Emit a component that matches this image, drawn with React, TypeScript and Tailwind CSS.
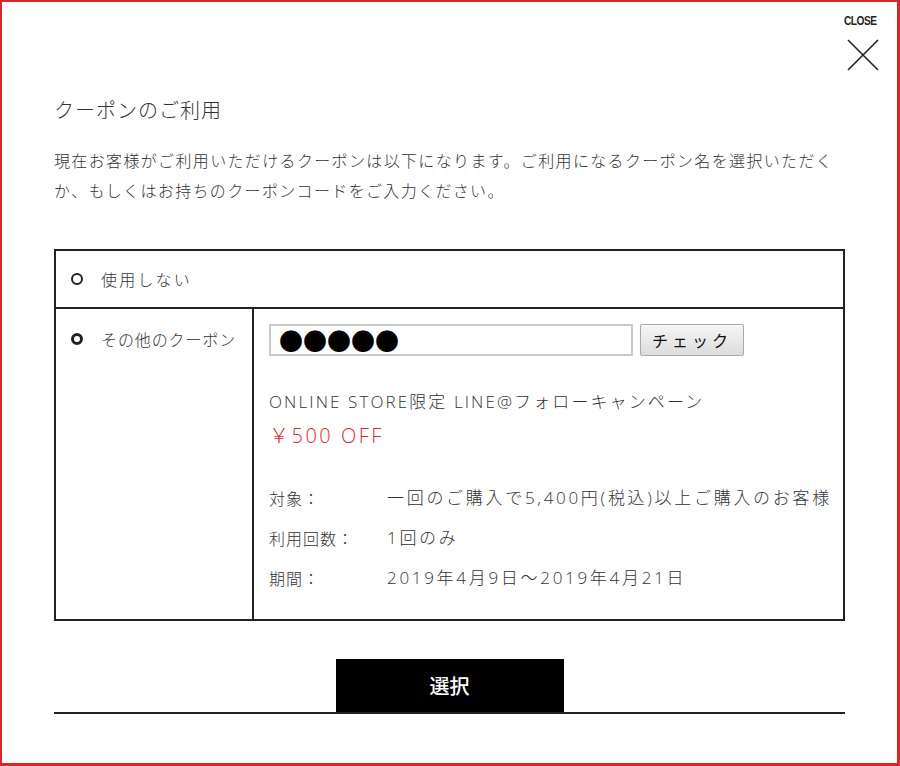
import { useState } from "react";

const jp = "font-['Noto_Sans_CJK_JP',sans-serif]";
const mixed = "font-['Open_Sans','Noto_Sans_CJK_JP',sans-serif]";

const details = [
  { label: "対象：", value: "一回のご購入で5,400円(税込)以上ご購入のお客様" },
  { label: "利用回数：", value: "1回のみ" },
  { label: "期間：", value: "2019年4月9日～2019年4月21日" },
];

function Radio({ checked }: { checked: boolean }) {
  return (
    <span
      className={`block h-[12px] w-[12px] shrink-0 rounded-full border-[#222] ${
        checked ? "border-[3.5px]" : "border-2"
      }`}
    />
  );
}

export default function App() {
  const [selected, setSelected] = useState<"none" | "other">("other");

  return (
    <div
      className={`relative h-[766px] w-[900px] border-2 border-r-[3px] border-b-[3px] border-[#d9262c] bg-white font-light text-[#333] ${jp}`}
    >
      <button className="absolute top-[12px] left-[836px] flex w-[44px] flex-col items-center">
        <span className="font-['Liberation_Sans',sans-serif] text-[12px] leading-[14px] font-bold tracking-[-0.6px] text-[#222] [transform:scaleX(0.85)]">
          CLOSE
        </span>
      </button>
      <svg
        className="absolute top-[36px] left-[844px]"
        width="34"
        height="34"
        viewBox="0 0 34 34"
      >
        <path d="M2 2 L32 32 M32 2 L2 32" stroke="#222" strokeWidth="1.6" />
      </svg>

      <div className="px-[52px] pt-[94px]">
        <h1 className="text-[20px] leading-[28px] font-light tracking-[1px]">クーポンのご利用</h1>
        <p className="mt-[21px] text-[16px] leading-[30px] tracking-[1.35px]">
          現在お客様がご利用いただけるクーポンは以下になります。ご利用になるクーポン名を選択いただく
          <br />
          か、もしくはお持ちのクーポンコードをご入力ください。
        </p>

        <div className="mt-[44px] border-2 border-[#222]">
          <label
            className="flex h-[58px] cursor-pointer items-center gap-[18px] border-b-2 border-[#222] pl-[15px] text-[16px] tracking-[2.2px]"
            onClick={() => setSelected("none")}
          >
            <Radio checked={selected === "none"} />
            使用しない
          </label>

          <div className="flex">
            <label
              className="flex w-[198px] shrink-0 cursor-pointer items-start gap-[18px] border-r-2 border-[#222] pt-[15px] pl-[15px] text-[16px] leading-[30px] tracking-[0.9px]"
              onClick={() => setSelected("other")}
            >
              <span className="flex h-[30px] items-center">
                <Radio checked={selected === "other"} />
              </span>
              その他のクーポン
            </label>

            <div className={`flex-1 pt-[15px] pl-[15px] pb-[21px] ${mixed}`}>
              <div className="flex items-center gap-[7px]">
                <div
                  className={`flex h-[32px] w-[364px] items-center border-2 border-[#c8c8c8] pl-[8px] text-[24px] leading-none font-normal text-black ${jp}`}
                >
                  ●●●●●
                </div>
                <button
                  className={`h-[32px] w-[104px] rounded-[2px] border border-[#a9a9a9] bg-gradient-to-b from-[#f6f6f6] to-[#dcdcdc] text-[16px] font-normal tracking-[4px] text-[#111] ${jp}`}
                >
                  チェック
                </button>
              </div>

              <p className="mt-[31px] text-[17px] leading-[30px] tracking-[2.1px]">
                ONLINE STORE限定 LINE@フォローキャンペーン
              </p>
              <p className="mt-[4px] text-[20px] leading-[30px] tracking-[2.5px] text-[#e0262f]">
                ￥500 OFF
              </p>

              <div className="mt-[27px]">
                {details.map((d) => (
                  <div key={d.label} className="flex h-[40px] items-center">
                    <span className={`w-[118px] shrink-0 text-[16px] tracking-[1px] ${jp}`}>
                      {d.label}
                    </span>
                    <span className="text-[17px] tracking-[2.7px] whitespace-nowrap">{d.value}</span>
                  </div>
                ))}
              </div>
            </div>
          </div>
        </div>

        <div className="mt-[38px] flex justify-center border-b-2 border-[#222]">
          <button className="h-[53px] w-[228px] bg-black text-[20px] font-medium text-white">
            選択
          </button>
        </div>
      </div>
    </div>
  );
}
